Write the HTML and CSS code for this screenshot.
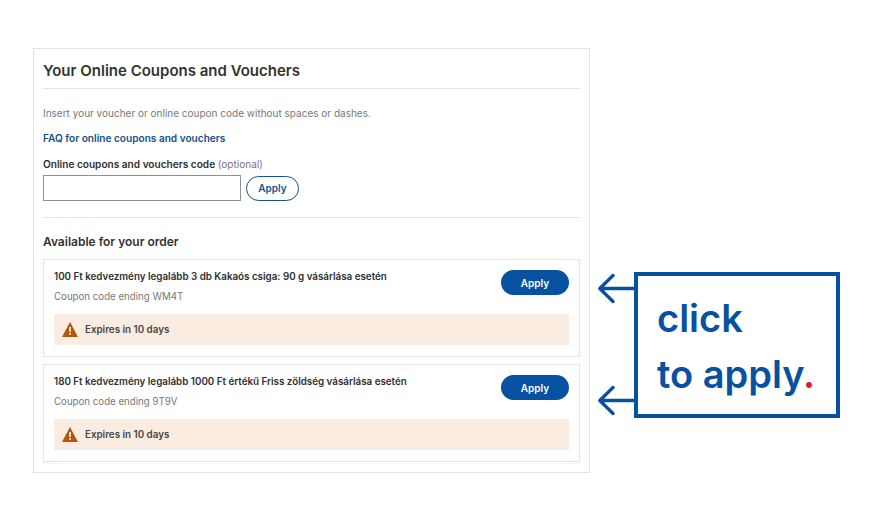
FILE: index.html
```html
<!DOCTYPE html>
<html lang="en">
<head>
    <meta charset="UTF-8">
    <meta name="viewport" content="width=device-width, initial-scale=1.0">
    <title>Coupons</title>
    <link rel="stylesheet" href="styles.css">
</head>
<body>
    <div class="page">
        <div class="panel">
            <h1>Your Online Coupons and Vouchers</h1>
            <p class="intro">Insert your voucher or online coupon code without spaces or dashes.</p>
            <a class="faq" href="#">FAQ for online coupons and vouchers</a>
            <label class="code-label" for="code">Online coupons and vouchers code <span>(optional)</span></label>
            <div class="code-row">
                <input type="text" id="code">
                <button class="apply-outline">Apply</button>
            </div>
            <h2>Available for your order</h2>
            <div class="coupon-list">
                <div class="coupon">
                    <div class="coupon-top">
                        <div>
                            <p class="coupon-title">100 Ft kedvezmény legalább 3 db Kakaós csiga: 90 g vásárlása esetén</p>
                            <p class="coupon-code">Coupon code ending WM4T</p>
                        </div>
                        <button class="apply-solid">Apply</button>
                    </div>
                    <div class="expires">
                        <svg class="warn" viewBox="0 0 16 15"><path d="M8 0 16 15H0Z" fill="#b5560f"/><path d="M7.2 5h1.6v5H7.200ZM7.200 11h1.600v1.700H7.200Z" fill="#fff"/></svg>
                        Expires in 10 days
                    </div>
                </div>
                <div class="coupon">
                    <div class="coupon-top">
                        <div>
                            <p class="coupon-title">180 Ft kedvezmény legalább 1000 Ft értékű Friss zöldség vásárlása esetén</p>
                            <p class="coupon-code">Coupon code ending 9T9V</p>
                        </div>
                        <button class="apply-solid">Apply</button>
                    </div>
                    <div class="expires">
                        <svg class="warn" viewBox="0 0 16 15"><path d="M8 0 16 15H0Z" fill="#b5560f"/><path d="M7.2 5h1.6v5H7.200ZM7.200 11h1.600v1.700H7.200Z" fill="#fff"/></svg>
                        Expires in 10 days
                    </div>
                </div>
                <div class="coupon-peek">
                    <svg class="warn" viewBox="0 0 16 15"><path d="M8 0 16 15H0Z" fill="#b5560f"/></svg>
                </div>
            </div>
        </div>
        <div class="callout">
            <svg class="arrows" viewBox="0 0 36 146">
                <path d="M36 16.500H2M15 3.500 1.800 16.500 15 29.500" />
                <path d="M36 128.500H2M15 115.500 1.800 128.500 15 141.500" />
            </svg>
            <div class="callout-box">click<br>to apply<span class="dot">.</span></div>
        </div>
    </div>
</body>
</html>
```
FILE: styles.css
```css
* {
    margin: 0;
    padding: 0;
    box-sizing: border-box;
    font-family: "Inter", "Noto Sans", sans-serif;
}

body {
    background-color: #fff;
    color: #2e2f32;
}

.page {
    display: flex;
    align-items: flex-start;
    padding: 48px 0 0 33px;
}

.panel {
    width: 557px;
    height: 425px;
    border: 1px solid #e3e4e5;
    padding: 0 9px;
    overflow: hidden;
    display: flex;
    flex-direction: column;
}

h1 {
    font-size: 15px;
    font-weight: 600;
    line-height: 20px;
    color: #333;
    padding: 12px 0 7px;
    border-bottom: 1px solid #e3e4e5;
    margin-bottom: 17px;
}

.intro {
    font-size: 10px;
    line-height: 14px;
    color: #77787c;
    margin-bottom: 11px;
}

.faq {
    font-size: 10.100px;
    font-weight: 600;
    line-height: 14px;
    color: #14528c;
    text-decoration: none;
    margin-bottom: 11px;
}

.code-label {
    font-size: 10.100px;
    font-weight: 600;
    line-height: 14px;
    color: #2e2f32;
    margin: 1px 0 4px;
}

.code-label span {
    font-weight: 400;
    color: #77787c;
}

.code-row {
    display: flex;
    align-items: center;
    gap: 5px;
    padding-bottom: 16px;
    border-bottom: 1px solid #e3e4e5;
    margin-bottom: 16px;
}

#code {
    width: 198px;
    height: 26px;
    border: 1px solid #909196;
    background-color: #fff;
}

.apply-outline {
    width: 53px;
    height: 25px;
    border: 1px solid #14528c;
    border-radius: 13px;
    background-color: #fff;
    color: #14528c;
    font-size: 10px;
    font-weight: 600;
}

h2 {
    font-size: 12px;
    font-weight: 600;
    line-height: 16px;
    color: #333;
    margin-bottom: 9px;
}

.coupon-list {
    display: flex;
    flex-direction: column;
    gap: 7px;
    height: 205px;
    overflow: hidden;
    flex-shrink: 0;
}

.coupon {
    flex-shrink: 0;
    height: 98px;
    border: 1px solid #e3e4e5;
    padding: 10px 10px 0;
}

.coupon-top {
    display: flex;
    justify-content: space-between;
    align-items: flex-start;
    height: 44px;
}

.coupon-title {
    font-size: 9.800px;
    font-weight: 600;
    line-height: 14px;
    color: #2e2f32;
    margin-bottom: 6px;
}

.coupon-code {
    font-size: 9.700px;
    line-height: 14px;
    color: #77787c;
}

.apply-solid {
    width: 68px;
    height: 25px;
    border: none;
    border-radius: 13px;
    background-color: #0652a0;
    color: #fff;
    font-size: 10px;
    font-weight: 600;
}

.expires {
    display: flex;
    align-items: center;
    gap: 7px;
    height: 31px;
    padding-left: 8px;
    background-color: #faece0;
    font-size: 9.800px;
    font-weight: 600;
    color: #46474a;
}

.warn {
    width: 16px;
    height: 15px;
    flex-shrink: 0;
}

.coupon-peek {
    flex-shrink: 0;
    height: 40px;
    margin-top: -6px;
    padding-left: 18px;
    background-color: #f7f3ee;
}

.callout {
    display: flex;
    margin: 224px 0 0 8px;
}

.arrows {
    width: 36px;
    height: 146px;
    fill: none;
    stroke: #0652a0;
    stroke-width: 3.300;
    stroke-linecap: round;
    stroke-linejoin: round;
}

.callout-box {
    width: 206px;
    height: 146px;
    border: 4px solid #0652a0;
    padding: 14px 0 0 19px;
    font-size: 38px;
    font-weight: 600;
    line-height: 56px;
    color: #0652a0;
}

.dot {
    color: #e31837;
}
```
